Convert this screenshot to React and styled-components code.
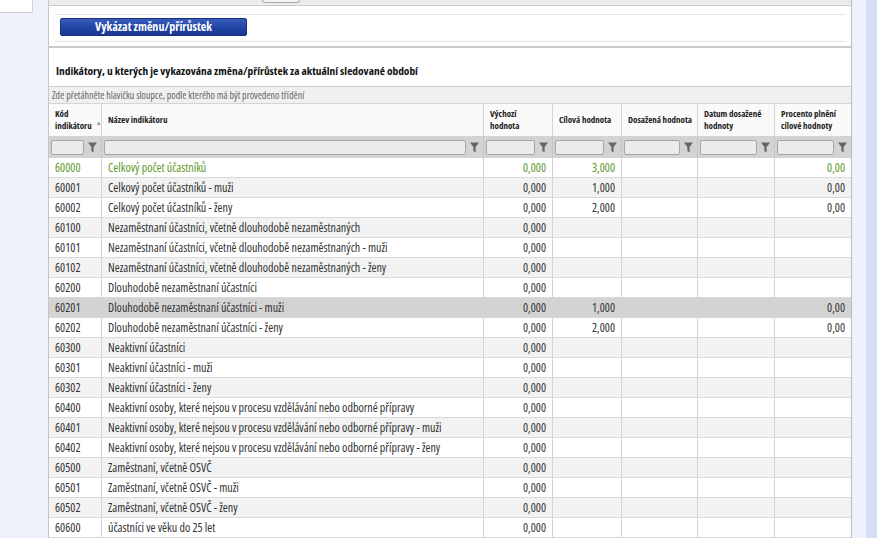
import React from "react";
import styled, { createGlobalStyle } from "styled-components";

const GlobalStyle = createGlobalStyle`
  html, body {
    margin: 0;
    padding: 0;
    background: #eef1fb;
    overflow: hidden;
  }
  body {
    font-family: "Open Sans", "Liberation Sans", Arial, sans-serif;
    font-stretch: 75%;
    color: #333;
  }
`;

const columns = "53px 382px 69px 69px 76px 77px 76px";

const rows = [
  { code: "60000", name: "Celkový počet účastníků", start: "0,000", target: "3,000", pct: "0,00", green: true },
  { code: "60001", name: "Celkový počet účastníků - muži", start: "0,000", target: "1,000", pct: "0,00" },
  { code: "60002", name: "Celkový počet účastníků - ženy", start: "0,000", target: "2,000", pct: "0,00" },
  { code: "60100", name: "Nezaměstnaní účastníci, včetně dlouhodobě nezaměstnaných", start: "0,000" },
  { code: "60101", name: "Nezaměstnaní účastníci, včetně dlouhodobě nezaměstnaných - muži", start: "0,000" },
  { code: "60102", name: "Nezaměstnaní účastníci, včetně dlouhodobě nezaměstnaných - ženy", start: "0,000" },
  { code: "60200", name: "Dlouhodobě nezaměstnaní účastníci", start: "0,000" },
  { code: "60201", name: "Dlouhodobě nezaměstnaní účastníci - muži", start: "0,000", target: "1,000", pct: "0,00", selected: true },
  { code: "60202", name: "Dlouhodobě nezaměstnaní účastníci - ženy", start: "0,000", target: "2,000", pct: "0,00" },
  { code: "60300", name: "Neaktivní účastníci", start: "0,000" },
  { code: "60301", name: "Neaktivní účastníci - muži", start: "0,000" },
  { code: "60302", name: "Neaktivní účastníci - ženy", start: "0,000" },
  { code: "60400", name: "Neaktivní osoby, které nejsou v procesu vzdělávání nebo odborné přípravy", start: "0,000" },
  { code: "60401", name: "Neaktivní osoby, které nejsou v procesu vzdělávání nebo odborné přípravy - muži", start: "0,000" },
  { code: "60402", name: "Neaktivní osoby, které nejsou v procesu vzdělávání nebo odborné přípravy - ženy", start: "0,000" },
  { code: "60500", name: "Zaměstnaní, včetně OSVČ", start: "0,000" },
  { code: "60501", name: "Zaměstnaní, včetně OSVČ - muži", start: "0,000" },
  { code: "60502", name: "Zaměstnaní, včetně OSVČ - ženy", start: "0,000" },
  { code: "60600", name: "účastníci ve věku do 25 let", start: "0,000" },
];

const headers = [
  { label: "Kód\nindikátoru", sort: true },
  { label: "Název indikátoru" },
  { label: "Výchozí\nhodnota" },
  { label: "Cílová hodnota" },
  { label: "Dosažená hodnota" },
  { label: "Datum dosažené\nhodnoty" },
  { label: "Procento plnění\ncílové hodnoty" },
];

function FunnelIcon() {
  return (
    <svg width="9" height="11" viewBox="0 0 9 11">
      <path d="M0 0.5 H9 L5.6 5 V10.5 L3.4 9 V5 Z" fill="#666" />
    </svg>
  );
}

export default function App() {
  return (
    <>
      <GlobalStyle />
      <Page>
        <LeftRail>
          <SideStub />
        </LeftRail>
        <Panel>
          <TopBand>
            <BandButton />
          </TopBand>
          <Toolbar>
            <ActionButton>Vykázat změnu/přírůstek</ActionButton>
          </Toolbar>
          <ThickRule />
          <SectionTitle>
            Indikátory, u kterých je vykazována změna/přírůstek za aktuální sledované období
          </SectionTitle>
          <Grid>
            <GroupPanel>
              Zde přetáhněte hlavičku sloupce, podle kterého má být provedeno třídění
            </GroupPanel>
            <HeaderRow>
              {headers.map((h, i) => (
                <HeaderCell key={i}>
                  <span>{h.label}</span>
                  {h.sort && <SortArrow>▲</SortArrow>}
                </HeaderCell>
              ))}
            </HeaderRow>
            <FilterRow>
              {headers.map((h, i) => (
                <FilterCell key={i}>
                  <FilterInput />
                  <FunnelIcon />
                </FilterCell>
              ))}
            </FilterRow>
            {rows.map((r, i) => (
              <DataRow
                key={r.code}
                $alt={i % 2 === 1}
                $selected={r.selected}
                $green={r.green}
              >
                <Cell>{r.code}</Cell>
                <Cell>{r.name}</Cell>
                <Cell $num>{r.start}</Cell>
                <Cell $num>{r.target}</Cell>
                <Cell $num></Cell>
                <Cell $num></Cell>
                <Cell $num>{r.pct}</Cell>
              </DataRow>
            ))}
          </Grid>
        </Panel>
        <RightGutter>
          <GutterStripe />
        </RightGutter>
      </Page>
    </>
  );
}

const Page = styled.div`
  display: flex;
  height: 538px;
  overflow: hidden;
`;

const LeftRail = styled.div`
  width: 48px;
  flex: none;
`;

const SideStub = styled.div`
  width: 33px;
  height: 13px;
  box-sizing: border-box;
  background: #fff;
  border-right: 1px solid #cdd1dc;
  border-bottom: 1px solid #cdd1dc;
`;

const Panel = styled.div`
  width: 804px;
  flex: none;
  box-sizing: border-box;
  background: #fff;
  border-left: 1px solid #c6c6c6;
  border-right: 1px solid #bcbcbc;
  display: flex;
  flex-direction: column;
`;

const TopBand = styled.div`
  height: 5px;
  background: #ececec;
  border-bottom: 1px solid #cbcbcb;
  display: flex;
  align-items: flex-start;
`;

const BandButton = styled.div`
  margin-left: 213px;
  width: 36px;
  height: 2px;
  border: 1px solid #a9a9a9;
  border-top: none;
  border-radius: 0 0 3px 3px;
  background: #f4f4f4;
`;

const Toolbar = styled.div`
  margin: 8px 6px 0;
  padding: 3px 5px 5px;
  border-top: 1px solid #e2e2e2;
  border-bottom: 1px solid #e2e2e2;
  display: flex;
`;

const ActionButton = styled.button`
  width: 187px;
  height: 18px;
  padding: 0;
  border: 1px solid #1b2f7c;
  border-radius: 2px;
  background: linear-gradient(#3a5cbd, #2143a3 55%, #1b3891);
  color: #fff;
  font: inherit;
  font-size: 12px;
  font-weight: bold;
  line-height: 16px;
  text-align: center;
`;

const ThickRule = styled.div`
  margin-top: 4px;
  height: 2px;
  background: #cacaca;
`;

const SectionTitle = styled.div`
  padding: 15px 7px 0;
  height: 25px;
  font-size: 11.4px;
  font-weight: bold;
  line-height: 16px;
  color: #111;
`;

const Grid = styled.div`
  display: flex;
  flex-direction: column;
`;

const GroupPanel = styled.div`
  height: 16px;
  border-top: 1px solid #cfcfcf;
  border-bottom: 1px solid #d5d5d5;
  background: #f0f0f0;
  padding-left: 3px;
  font-size: 10px;
  line-height: 16px;
  color: #666;
`;

const RowBase = styled.div`
  display: grid;
  grid-template-columns: ${columns};
`;

const HeaderRow = styled(RowBase)`
  height: 32px;
  background: #fafafa;
`;

const HeaderCell = styled.div`
  box-sizing: border-box;
  border-right: 1px solid #d4d4d4;
  padding: 0 5px 0 6px;
  display: flex;
  align-items: center;
  gap: 4px;
  font-size: 9px;
  font-weight: bold;
  line-height: 12px;
  color: #222;
  white-space: pre-line;
  &:last-child {
    border-right: none;
  }
`;

const SortArrow = styled.span`
  align-self: flex-end;
  margin-bottom: 7px;
  font-size: 6px;
  color: #999;
`;

const FilterRow = styled(RowBase)`
  height: 22px;
  background: #d3d3d3;
`;

const FilterCell = styled.div`
  box-sizing: border-box;
  border-right: 1px solid #c6c6c6;
  padding: 0 4px 0 2px;
  display: flex;
  align-items: center;
  gap: 4px;
  &:last-child {
    border-right: none;
  }
`;

const FilterInput = styled.div`
  flex: 1;
  height: 15px;
  box-sizing: border-box;
  background: #ebebeb;
  border: 1px solid #a6a6a6;
  border-radius: 2px;
`;

const DataRow = styled(RowBase)`
  height: 20px;
  box-sizing: border-box;
  border-bottom: 1px solid #dadada;
  background: ${(p) => (p.$selected ? "#d3d3d3" : p.$alt ? "#f2f2f2" : "#fff")};
  color: ${(p) => (p.$green ? "#5e9a2c" : "#333")};
`;

const Cell = styled.div`
  box-sizing: border-box;
  border-right: 1px solid #d4d4d4;
  padding: 0 6px;
  font-size: 12px;
  line-height: 19px;
  white-space: nowrap;
  overflow: hidden;
  text-align: ${(p) => (p.$num ? "right" : "left")};
  &:last-child {
    border-right: none;
  }
`;

const RightGutter = styled.div`
  flex: 1;
  display: flex;
  padding-left: 14px;
  background: #eef2fc;
`;

const GutterStripe = styled.div`
  flex: 1;
  background: #d6def4;
`;
